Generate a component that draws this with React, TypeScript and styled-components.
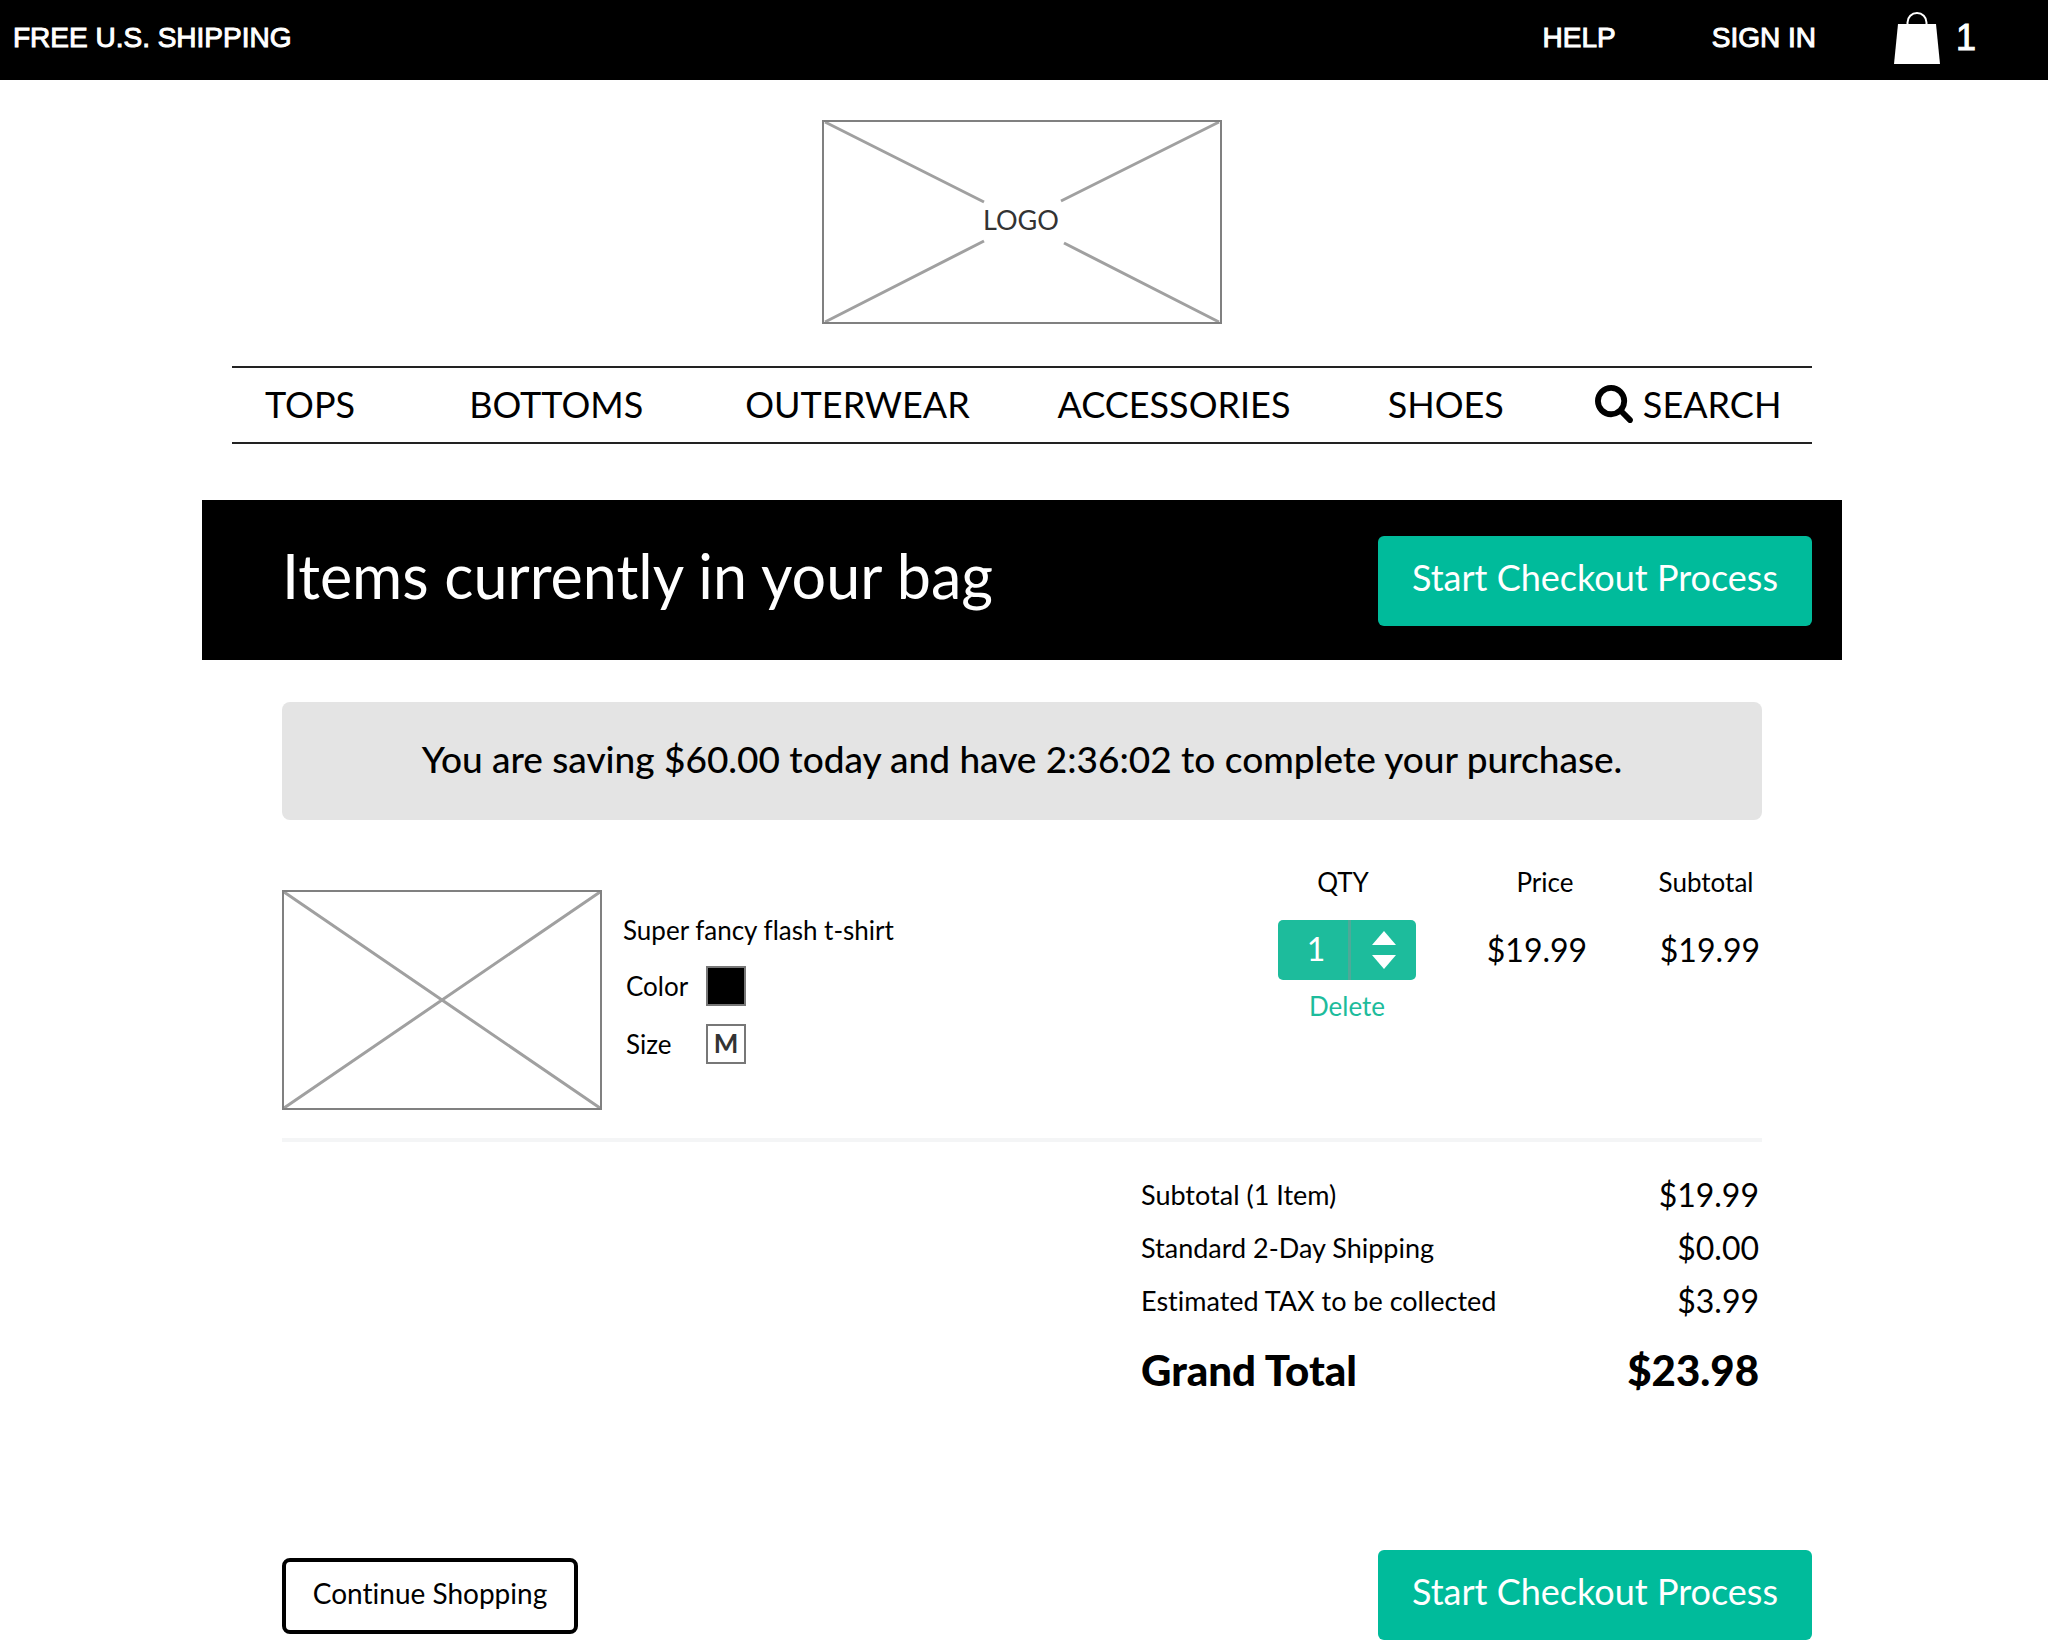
import React, { useState } from 'react';
import styled, { createGlobalStyle } from 'styled-components';

const sans = '"Lato", "Open Sans", sans-serif';
const grotesque = '"Liberation Sans", Arial, sans-serif';

const GlobalStyle = createGlobalStyle`
  *, *::before, *::after { box-sizing: border-box; }
  body {
    margin: 0;
    background: #fff;
    color: #000;
    font-family: ${sans};
    font-size: 26px;
    font-variant-ligatures: none;
    line-height: 32px;
  }
  button, input { font: inherit; color: inherit; }
  a { color: inherit; text-decoration: none; }
`;

const TopBar = styled.header`
  display: flex;
  align-items: center;
  justify-content: space-between;
  height: 80px;
  padding: 0 72px 4px 13px;
  background: #000;
  color: #fff;
  font-family: ${grotesque};
  font-size: 28px;
  -webkit-text-stroke: 1px #fff;
`;

const Promo = styled.p`
  margin: 0;
`;

const TopLinks = styled.nav`
  display: flex;
  align-items: center;
`;

const TopLink = styled.a`
  margin-right: 96px;
`;

const BagLink = styled.a`
  display: flex;
  align-items: center;
  gap: 16px;
  margin-left: -18px;
  font-size: 36px;
`;

const Page = styled.main`
  max-width: 1644px;
  margin: 0 auto;
  padding: 40px 4px 7px 0;
`;

const LogoFrame = styled.a`
  display: block;
  width: 400px;
  margin: 0 auto;
`;

const Drawing = styled.svg`
  display: block;
`;

const CategoryNav = styled.nav`
  display: grid;
  grid-template-columns: 204fr 276fr 312fr 330fr 207fr 217fr;
  align-items: center;
  height: 78px;
  margin: 42px 30px 0;
  padding: 0 0 2px 33px;
  border-top: 2px solid #222;
  border-bottom: 2px solid #222;
  font-size: 36px;
  line-height: 44px;
`;

const SearchLink = styled.a`
  display: flex;
  align-items: center;
  gap: 10px;
`;

const Banner = styled.section`
  display: flex;
  align-items: center;
  justify-content: space-between;
  height: 160px;
  margin-top: 56px;
  padding: 2px 30px 0 80px;
  background: #000;
  color: #fff;
`;

const Title = styled.h1`
  margin: 0;
  padding-bottom: 10px;
  font-size: 61px;
  font-weight: 400;
  line-height: 72px;
`;

const CheckoutButton = styled.button`
  width: 434px;
  height: 90px;
  padding: 0 0 8px;
  border: 0;
  border-radius: 6px;
  background: #00bb9b;
  color: #fff;
  font-size: 36px;
  cursor: pointer;
`;

const Content = styled.div`
  padding: 0 80px;
`;

const Notice = styled.p`
  margin: 42px 0 0;
  padding: 35px 0 39px;
  border-radius: 8px;
  background: #e4e4e4;
  font-size: 37px;
  font-weight: 500;
  line-height: 44px;
  text-align: center;
`;

const ItemRow = styled.section`
  display: flex;
  justify-content: space-between;
  padding-bottom: 28px;
  border-bottom: 4px solid #f4f5f6;
`;

const Product = styled.div`
  display: flex;
  gap: 21px;
  padding-top: 70px;
`;

const Details = styled.div`
  padding-top: 24px;
`;

const ProductName = styled.h2`
  margin: 0 0 20px;
  font-size: 26px;
  font-weight: 400;
  line-height: 32px;
`;

const Option = styled.div`
  display: flex;
  align-items: center;
  height: 40px;
  margin-bottom: 18px;
`;

const OptionName = styled.span`
  width: 83px;
  padding-left: 3px;
`;

const Swatch = styled.button<{ $fill: string }>`
  width: 40px;
  height: 40px;
  padding: 0 0 2px;
  border: 2px solid #777;
  background: ${(p) => p.$fill};
  color: #333;
  font-weight: 700;
  line-height: 32px;
`;

const PriceTable = styled.table`
  align-self: flex-start;
  width: 484px;
  margin-top: 46px;
  border-collapse: collapse;
  table-layout: fixed;
`;

const HeadCell = styled.th<{ $width: number; $inset: string }>`
  width: ${(p) => p.$width}px;
  padding: ${(p) => p.$inset};
  font-weight: 400;
  text-align: center;
`;

const Cell = styled.td`
  padding: 0;
  font-size: 32px;
  text-align: center;
`;

const Stepper = styled.div`
  display: flex;
  height: 60px;
  border-radius: 5px;
  background: #1dbc9c;
  color: #fff;
`;

const Quantity = styled.input`
  width: 73px;
  padding: 0 0 4px 6px;
  border: 0;
  border-right: 3px solid #4fa998;
  background: none;
  font-size: 32px;
  text-align: center;
`;

const StepButtons = styled.div`
  display: flex;
  flex: 1;
  flex-direction: column;
  align-items: center;
  justify-content: center;
  gap: 10px;
`;

const StepButton = styled.button`
  padding: 0;
  border: 0;
  background: none;
  cursor: pointer;
`;

const DeleteButton = styled.button`
  padding: 10px 0 0;
  border: 0;
  background: none;
  color: #1dbc9c;
  font-size: 26px;
  line-height: 32px;
  cursor: pointer;
`;

const Totals = styled.dl`
  width: 621px;
  margin: 26px 0 0 auto;
  padding-right: 3px;
`;

const TotalRow = styled.div<{ $grand?: boolean }>`
  display: flex;
  align-items: center;
  justify-content: space-between;
  height: 53px;
  margin-top: ${(p) => (p.$grand ? 16 : 0)}px;
  font-size: ${(p) => (p.$grand ? 42 : 27)}px;
  font-weight: ${(p) => (p.$grand ? 900 : 400)};
  line-height: 52px;
`;

const Amount = styled.dd<{ $grand?: boolean }>`
  margin: 0;
  font-size: ${(p) => (p.$grand ? 42 : 32)}px;
`;

const Actions = styled.div`
  display: flex;
  align-items: center;
  justify-content: space-between;
  margin-top: 154px;
  padding: 0 30px 0 80px;
`;

const ContinueButton = styled.button`
  width: 296px;
  height: 76px;
  margin-top: 2px;
  padding: 0 0 6px;
  border: 4px solid #000;
  border-radius: 8px;
  background: #fff;
  font-size: 28px;
  cursor: pointer;
`;

const unitPrice = 19.99;
const shipping = 0;
const tax = 3.99;
const money = (value: number) => `$${value.toFixed(2)}`;
const categories = ['TOPS', 'BOTTOMS', 'OUTERWEAR', 'ACCESSORIES', 'SHOES'];

function BagIcon() {
  return (
    <Drawing width="46" height="52" viewBox="0 0 46 52" aria-hidden="true">
      <path d="M4 12H42L46 52H0Z" fill="#fff" />
      <path d="M13.500 13V10.500A9.500 9.500 0 0 1 32.500 10.500V13" fill="none" stroke="#fff" strokeWidth="2" />
    </Drawing>
  );
}

function SearchIcon() {
  return (
    <Drawing width="38" height="38" viewBox="0 128 1664 1664" aria-hidden="true">
      <path d="M1152 832q0-185-131.500-316.500t-316.500-131.500-316.500 131.500-131.500 316.500 131.500 316.500 316.500 131.500 316.500-131.500 131.500-316.500zm512 832q0 52-38 90t-90 38q-54 0-90-38l-343-342q-179 124-399 124-143 0-273.500-55.500t-225-150-150-225-55.500-273.500 55.500-273.500 150-225 225-150 273.500-55.500 273.500 55.500 225 150 150 225 55.500 273.500q0 220-124 399l343 343q37 37 37 90z" />
    </Drawing>
  );
}

function LogoPlaceholder() {
  return (
    <Drawing width="400" height="204" viewBox="0 0 400 204" role="img" aria-label="Logo">
      <path d="M3 2L162 82M397 2L239 81M3 202L162 121M397 202L242 123" stroke="#a0a0a0" strokeWidth="3" />
      <rect x="1" y="1" width="398" height="202" fill="none" stroke="#808080" strokeWidth="2" />
      <text x="199" y="110" textAnchor="middle" fontSize="27" fill="#333">LOGO</text>
    </Drawing>
  );
}

function PhotoPlaceholder() {
  return (
    <Drawing width="320" height="220" viewBox="0 0 320 220" role="img" aria-label="Super fancy flash t-shirt">
      <path d="M2 2L318 218M318 2L2 218" stroke="#a0a0a0" strokeWidth="3" />
      <rect x="1" y="1" width="318" height="218" fill="none" stroke="#808080" strokeWidth="2" />
    </Drawing>
  );
}

function Triangle({ down }: { down?: boolean }) {
  return (
    <Drawing width="24" height="14" viewBox="0 0 24 14" aria-hidden="true">
      <path d={down ? 'M0 0H24L12 14Z' : 'M12 0L24 14H0Z'} fill="#fff" />
    </Drawing>
  );
}

export default function App() {
  const [quantity, setQuantity] = useState(1);
  const subtotal = quantity * unitPrice;

  return (
    <>
      <GlobalStyle />
      <TopBar>
        <Promo>FREE U.S. SHIPPING</Promo>
        <TopLinks aria-label="Account">
          <TopLink href="#help">HELP</TopLink>
          <TopLink href="#sign-in">SIGN IN</TopLink>
          <BagLink href="#bag" aria-label="Shopping bag">
            <BagIcon />
            <span>{quantity}</span>
          </BagLink>
        </TopLinks>
      </TopBar>
      <Page>
        <LogoFrame href="#home">
          <LogoPlaceholder />
        </LogoFrame>
        <CategoryNav aria-label="Categories">
          {categories.map((name) => (
            <a key={name} href={`#${name.toLowerCase()}`}>{name}</a>
          ))}
          <SearchLink href="#search">
            <SearchIcon />
            SEARCH
          </SearchLink>
        </CategoryNav>
        <Banner>
          <Title>Items currently in your bag</Title>
          <CheckoutButton type="button">Start Checkout Process</CheckoutButton>
        </Banner>
        <Content>
          <Notice>You are saving $60.00 today and have 2:36:02 to complete your purchase.</Notice>
          <ItemRow>
            <Product>
              <PhotoPlaceholder />
              <Details>
                <ProductName>Super fancy flash t-shirt</ProductName>
                <Option>
                  <OptionName>Color</OptionName>
                  <Swatch type="button" $fill="#000" aria-label="Black" />
                </Option>
                <Option>
                  <OptionName>Size</OptionName>
                  <Swatch type="button" $fill="#fff">M</Swatch>
                </Option>
              </Details>
            </Product>
            <PriceTable>
              <thead>
                <tr>
                  <HeadCell $width={138} $inset="0 8px 22px 0" scope="col" id="qty">QTY</HeadCell>
                  <HeadCell $width={242} $inset="0 0 22px 16px" scope="col">Price</HeadCell>
                  <HeadCell $width={104} $inset="0 8px 22px 0" scope="col">Subtotal</HeadCell>
                </tr>
              </thead>
              <tbody>
                <tr>
                  <Cell>
                    <Stepper>
                      <Quantity
                        aria-labelledby="qty"
                        inputMode="numeric"
                        value={quantity}
                        onChange={(e) => setQuantity(Number(e.target.value) || 0)}
                      />
                      <StepButtons>
                        <StepButton type="button" aria-label="Increase quantity" onClick={() => setQuantity(quantity + 1)}>
                          <Triangle />
                        </StepButton>
                        <StepButton type="button" aria-label="Decrease quantity" onClick={() => setQuantity(Math.max(0, quantity - 1))}>
                          <Triangle down />
                        </StepButton>
                      </StepButtons>
                    </Stepper>
                  </Cell>
                  <Cell>{money(unitPrice)}</Cell>
                  <Cell>{money(subtotal)}</Cell>
                </tr>
                <tr>
                  <Cell>
                    <DeleteButton type="button" onClick={() => setQuantity(0)}>Delete</DeleteButton>
                  </Cell>
                </tr>
              </tbody>
            </PriceTable>
          </ItemRow>
          <Totals>
            <TotalRow>
              <dt>Subtotal ({quantity} Item)</dt>
              <Amount>{money(subtotal)}</Amount>
            </TotalRow>
            <TotalRow>
              <dt>Standard 2-Day Shipping</dt>
              <Amount>{money(shipping)}</Amount>
            </TotalRow>
            <TotalRow>
              <dt>Estimated TAX to be collected</dt>
              <Amount>{money(tax)}</Amount>
            </TotalRow>
            <TotalRow $grand>
              <dt>Grand Total</dt>
              <Amount $grand>{money(subtotal + shipping + tax)}</Amount>
            </TotalRow>
          </Totals>
        </Content>
        <Actions>
          <ContinueButton type="button">Continue Shopping</ContinueButton>
          <CheckoutButton type="button">Start Checkout Process</CheckoutButton>
        </Actions>
      </Page>
    </>
  );
}
